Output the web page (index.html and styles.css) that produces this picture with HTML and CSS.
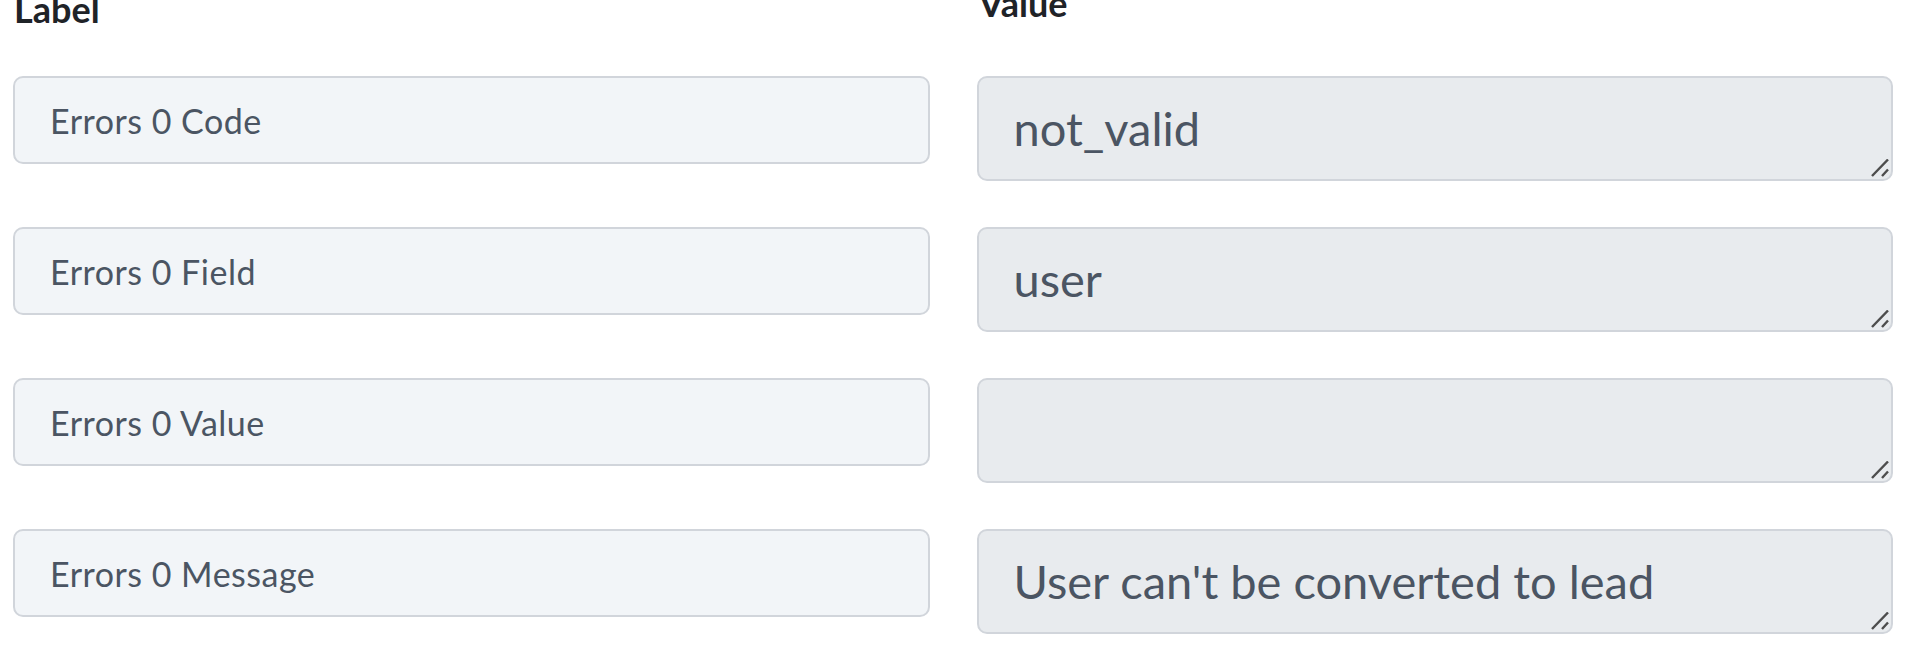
FILE: index.html
```html
<!DOCTYPE html>
<html lang="en">
<head>
    <meta charset="UTF-8">
    <meta name="viewport" content="width=device-width, initial-scale=1.0">
    <title>Error fields</title>
    <link rel="stylesheet" href="styles.css">
</head>
<body>

<div class="mapping">
    <div class="mapping-head">
        <h3 class="col-title col-title-label">Label</h3>
        <h3 class="col-title col-title-value">Value</h3>
    </div>

    <div class="mapping-rows">
        <input class="field-label" type="text" value="Errors 0 Code" readonly>
        <div class="value-box">
            <textarea class="field-value" readonly>not_valid</textarea>
            <svg class="resize-grip" viewBox="0 0 18 18"><path d="M17 0.5 1 17M17 10.5 11 17"/></svg>
        </div>

        <input class="field-label" type="text" value="Errors 0 Field" readonly>
        <div class="value-box">
            <textarea class="field-value" readonly>user</textarea>
            <svg class="resize-grip" viewBox="0 0 18 18"><path d="M17 0.5 1 17M17 10.5 11 17"/></svg>
        </div>

        <input class="field-label" type="text" value="Errors 0 Value" readonly>
        <div class="value-box">
            <textarea class="field-value" readonly></textarea>
            <svg class="resize-grip" viewBox="0 0 18 18"><path d="M17 0.5 1 17M17 10.5 11 17"/></svg>
        </div>

        <input class="field-label" type="text" value="Errors 0 Message" readonly>
        <div class="value-box">
            <textarea class="field-value" readonly>User can't be converted to lead</textarea>
            <svg class="resize-grip" viewBox="0 0 18 18"><path d="M17 0.5 1 17M17 10.5 11 17"/></svg>
        </div>
    </div>
</div>

</body>
</html>
```

FILE: styles.css
```css
body {
    margin: 0;
    padding: 0;
    background-color: #fff;
    font-family: Lato, "Open Sans", sans-serif;
    overflow: hidden;
}
.mapping {
    padding: 0 30px 0 13px;
}
.mapping-head {
    display: grid;
    grid-template-columns: 1fr 1fr;
    column-gap: 47px;
    height: 76px;
    align-items: start;
}
.col-title {
    margin: 0;
    font-size: 36px;
    line-height: 36px;
    font-weight: 700;
    color: #1f2328;
}
.col-title-label {
    margin-top: -9px;
    padding-left: 1px;
}
.col-title-value {
    margin-top: -15px;
    padding-left: 2px;
}
.mapping-rows {
    display: grid;
    grid-template-columns: 1fr 1fr;
    column-gap: 47px;
    row-gap: 46px;
    align-items: start;
}
.field-label,
.field-value {
    box-sizing: border-box;
    width: 100%;
    margin: 0;
    border: 2px solid #d1d5db;
    border-radius: 10px;
    font-family: Lato, "Open Sans", sans-serif;
    color: #4b5563;
    outline: none;
}
.field-label {
    height: 88px;
    padding: 0 35px;
    font-size: 34px;
    letter-spacing: 0.5px;
    background-color: #f2f5f8;
}
.value-box {
    position: relative;
}
.field-value {
    display: block;
    height: 105px;
    padding: 15px 35px;
    font-size: 47px;
    line-height: 1.5;
    background-color: #e8ebee;
    resize: none;
    overflow: hidden;
}
.resize-grip {
    position: absolute;
    right: 4px;
    bottom: 4px;
    width: 18px;
    height: 18px;
    fill: none;
    stroke: #4d4d4d;
    stroke-width: 2.4;
    pointer-events: none;
}
```
